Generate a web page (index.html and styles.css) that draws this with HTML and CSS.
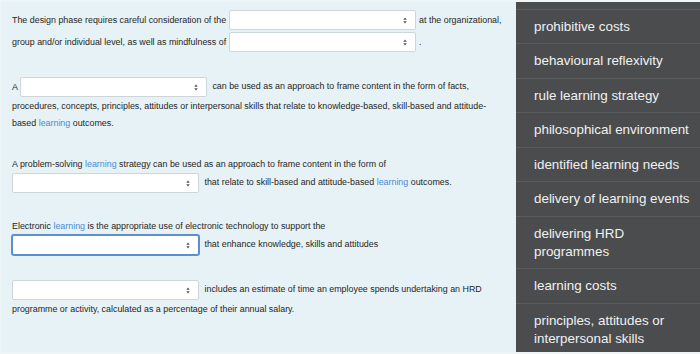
FILE: index.html
```html
<!DOCTYPE html>
<html lang="en">
<head>
    <meta charset="UTF-8">
    <meta name="viewport" content="width=device-width, initial-scale=1.0">
    <title>Drag and drop into text</title>
    <link rel="stylesheet" href="styles.css">
</head>
<body>
    <div class="page">
        <div class="questions">
            <div class="question">
                <div class="line">The design phase requires careful consideration of the <span class="gap"><svg class="arrow" viewBox="0 0 6 10"><path d="M3 0.5L5.6 4H0.4Z M3 9.5L5.6 6H0.4Z"/></svg></span> at the organizational,</div>
                <div class="line">group and/or individual level, as well as mindfulness of <span class="gap"><svg class="arrow" viewBox="0 0 6 10"><path d="M3 0.5L5.6 4H0.4Z M3 9.5L5.6 6H0.4Z"/></svg></span> .</div>
            </div>

            <div class="question">
                <div class="line">A <span class="gap"><svg class="arrow" viewBox="0 0 6 10"><path d="M3 0.5L5.6 4H0.4Z M3 9.5L5.6 6H0.4Z"/></svg></span> <span class="after">can be used as an approach to frame content in the form of facts,</span></div>
                <div class="line">procedures, concepts, principles, attitudes or interpersonal skills that relate to knowledge-based, skill-based and attitude-</div>
                <div class="line">based <a class="link" href="#">learning</a> outcomes.</div>
            </div>

            <div class="question">
                <div class="line">A problem-solving <a class="link" href="#">learning</a> strategy can be used as an approach to frame content in the form of</div>
                <div class="line"><span class="gap"><svg class="arrow" viewBox="0 0 6 10"><path d="M3 0.5L5.6 4H0.4Z M3 9.5L5.6 6H0.4Z"/></svg></span> <span class="after">that relate to skill-based and attitude-based <a class="link" href="#">learning</a> outcomes.</span></div>
            </div>

            <div class="question">
                <div class="line">Electronic <a class="link" href="#">learning</a> is the appropriate use of electronic technology to support the</div>
                <div class="line"><span class="gap focused"><svg class="arrow" viewBox="0 0 6 10"><path d="M3 0.5L5.6 4H0.4Z M3 9.5L5.6 6H0.4Z"/></svg></span> <span class="after">that enhance knowledge, skills and attitudes</span></div>
            </div>

            <div class="question">
                <div class="line"><span class="gap"><svg class="arrow" viewBox="0 0 6 10"><path d="M3 0.5L5.6 4H0.4Z M3 9.5L5.6 6H0.4Z"/></svg></span> <span class="after">includes an estimate of time an employee spends undertaking an HRD</span></div>
                <div class="line">programme or activity, calculated as a percentage of their annual salary.</div>
            </div>
        </div>

        <ul class="answers">
            <li class="spacer"></li>
            <li>prohibitive costs</li>
            <li>behavioural reflexivity</li>
            <li>rule learning strategy</li>
            <li>philosophical environment</li>
            <li>identified learning needs</li>
            <li>delivery of learning events</li>
            <li>delivering HRD<br>programmes</li>
            <li>learning costs</li>
            <li>principles, attitudes or<br>interpersonal skills</li>
        </ul>
    </div>
</body>
</html>
```

FILE: styles.css
```css
body {
    margin: 0;
    padding: 0;
    background-color: #eef5f7;
    font-family: "Liberation Sans", Arial, sans-serif;
}
.page {
    display: flex;
    height: 350px;
    padding: 2px 0 2px 1px;
    overflow: hidden;
}
.questions {
    width: 504px;
    padding: 7.5px 0 0 11px;
    background-color: #e6f2f5;
    color: #262626;
    font-size: 8.9px;
    line-height: 17px;
}
.question {
    margin-bottom: 24px;
}
.question:first-child .line + .line {
    margin-top: 1px;
}
.line {
    white-space: nowrap;
}
.after {
    margin-left: 2px;
}
.link {
    color: #4b8bd4;
    text-decoration: none;
}
.gap {
    display: inline-flex;
    align-items: center;
    justify-content: flex-end;
    vertical-align: middle;
    box-sizing: border-box;
    width: 187px;
    height: 20px;
    margin: 0.5px 1px;
    padding-right: 8px;
    background-color: #fff;
    border: 1px solid #cfd6d9;
    border-radius: 2px;
}
.line > .gap:first-child {
    margin-left: 0;
}
.gap.focused {
    border-color: #5a8fd0;
    box-shadow: 0 0 0 1px #5a8fd0;
}
.arrow {
    width: 4px;
    height: 7px;
    fill: #555;
}
.answers {
    flex: 1;
    margin: 0;
    padding: 0;
    list-style: none;
    background-color: #4b4c4d;
    color: #f1f1f1;
    font-size: 13.4px;
    line-height: 18px;
    overflow: hidden;
}
.answers li {
    padding: 8px 8px 7.5px 18px;
    border-bottom: 1px solid #5a5b5c;
}
.answers .spacer {
    height: 6.75px;
    padding: 0;
}
```
